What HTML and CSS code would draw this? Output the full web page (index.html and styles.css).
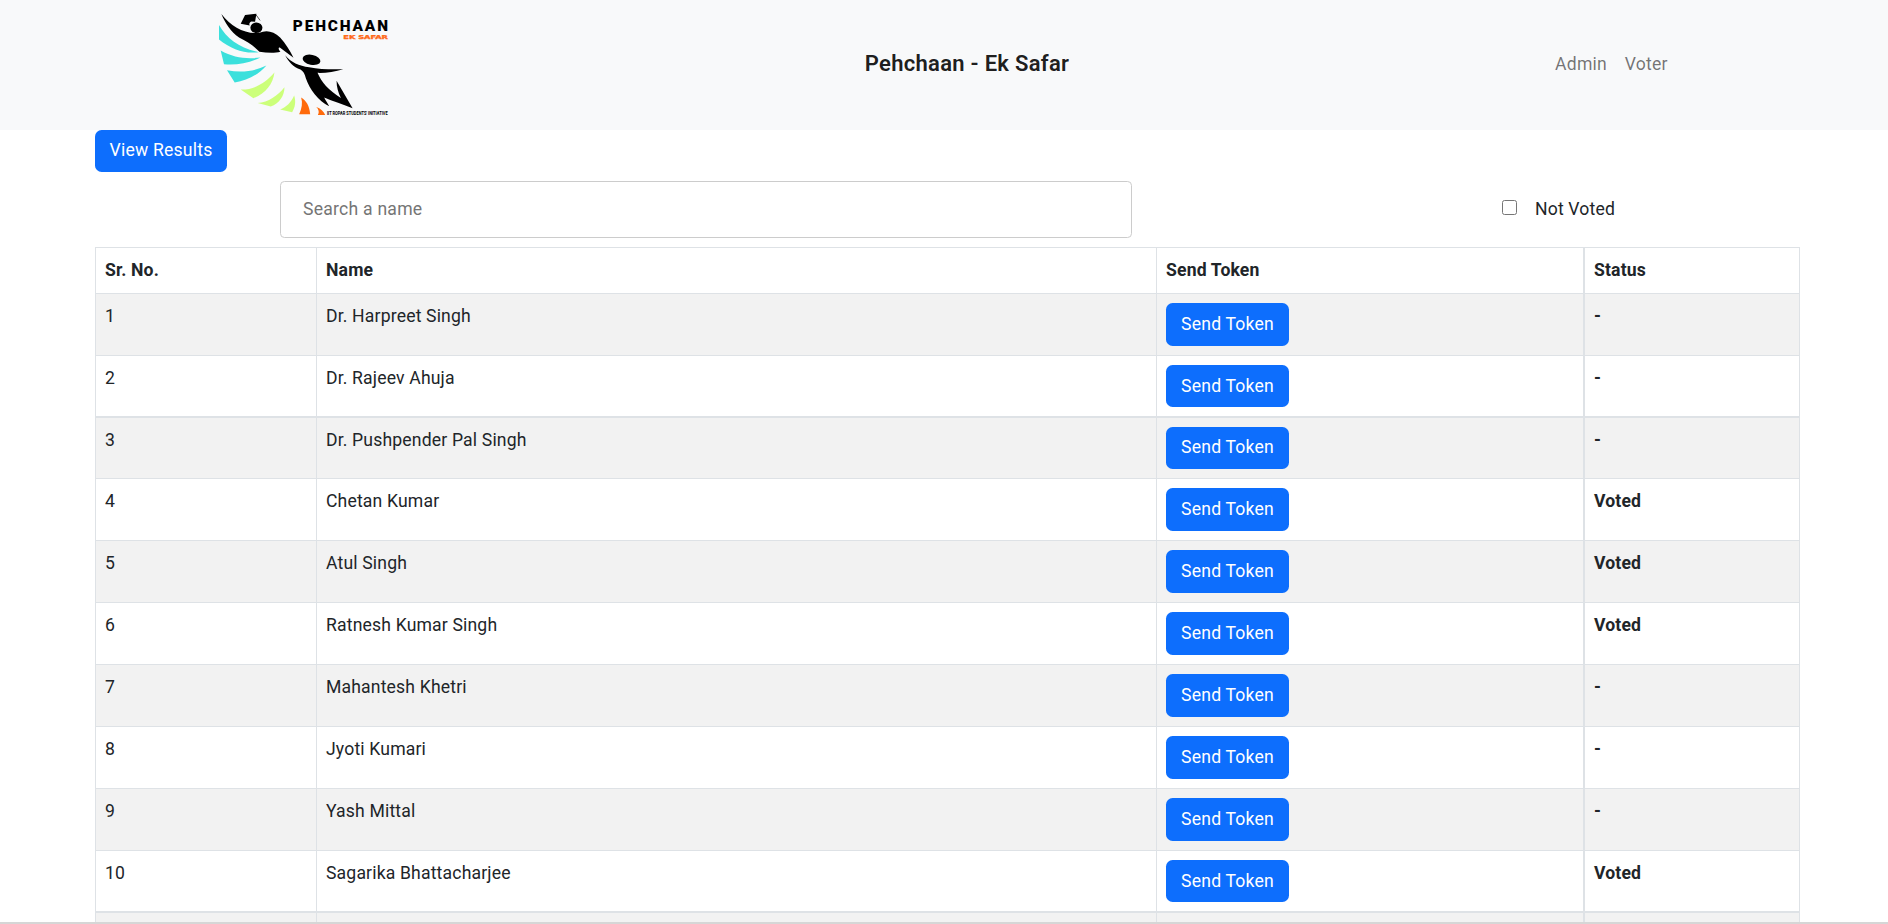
FILE: index.html
```
<!DOCTYPE html>
<html lang="en">
<head>
<meta charset="utf-8">
<title>Pehchaan - Ek Safar</title>
<link rel="stylesheet" href="styles.css">
</head>
<body>
<nav class="navbar">
  <svg class="logo" viewBox="42 40 506 308" role="img" aria-label="Pehchaan Ek Safar">
    <g fill="#3be0dc">
      <path d="M42 76C66 118 105 146 161 157C120 163 78 148 42 119Z"/>
      <path d="M47 152C86 174 124 178 166 173C132 189 94 197 57 193Z"/>
      <path d="M66 211C110 219 149 214 184 197C159 226 126 242 89 248Z"/>
    </g>
    <g fill="#ccff7a">
      <path d="M107 269C148 270 181 249 208 218C204 252 182 280 145 295Z"/>
      <path d="M158 309C190 307 217 288 238 262C238 289 222 310 197 320Z"/>
      <path d="M225 329C244 322 258 307 267 287C273 306 270 322 261 337Z"/>
    </g>
    <g fill="#ff6a0a">
      <path d="M288 293C303 302 313 318 315 343L282 343C290 326 293 310 288 293Z"/>
      <path d="M333 321C346 325 356 334 360 345L338 345C343 337 341 328 333 321Z"/>
    </g>
    <path d="M49 43C78 80 120 105 163 99C184 90 205 94 225 113C242 132 254 151 265 174L224 143C218 143 221 150 226 156C207 161 184 159 163 156C145 137 126 125 102 113C77 96 61 71 49 43Z"/>
    <path d="M107 72L120 46L154 42L150 66L139 65C132 68 132 74 134 77Z"/>
    <path d="M152 44L165 62" fill="none" stroke="#000" stroke-width="2"/>
    <ellipse cx="154" cy="84" rx="18" ry="16"/>
    <ellipse cx="319" cy="180" rx="27" ry="15" transform="rotate(12 319 180)"/>
    <path d="M240 166C257 187 282 198 312 202C343 209 376 208 414 208C389 215 361 220 337 219C348 246 370 272 407 294C399 279 394 262 394 243L442 325C414 314 382 304 357 293C361 302 367 310 372 319C339 303 314 269 302 235C299 222 294 214 286 209C264 202 251 186 240 166Z"/>
    <text class="logo-name" x="263" y="95" textLength="285">PEHCHAAN</text>
    <text class="logo-sub" x="414" y="117" textLength="134" lengthAdjust="spacingAndGlyphs">EK SAFAR</text>
    <text class="logo-note" x="365" y="345" textLength="182" lengthAdjust="spacingAndGlyphs">IIT ROPAR STUDENTS' INITIATIVE</text>
  </svg>
  <h1 class="title">Pehchaan - Ek Safar</h1>
  <div class="links"><a>Admin</a><a>Voter</a></div>
</nav>
<main class="container">
  <button class="btn results">View Results</button>
  <div class="filters">
    <input class="search" type="text" placeholder="Search a name">
    <label class="check"><input type="checkbox">Not Voted</label>
  </div>
  <table class="voters">
    <colgroup><col class="c-no"><col class="c-name"><col class="c-send"><col class="c-status"></colgroup>
    <thead><tr><th>Sr. No.</th><th>Name</th><th>Send Token</th><th>Status</th></tr></thead>
    <tbody>
      <tr><td>1</td><td>Dr. Harpreet Singh</td><td><button class="btn">Send Token</button></td><td>-</td></tr>
      <tr class="thick"><td>2</td><td>Dr. Rajeev Ahuja</td><td><button class="btn">Send Token</button></td><td>-</td></tr>
      <tr class="short"><td>3</td><td>Dr. Pushpender Pal Singh</td><td><button class="btn">Send Token</button></td><td>-</td></tr>
      <tr><td>4</td><td>Chetan Kumar</td><td><button class="btn">Send Token</button></td><td>Voted</td></tr>
      <tr><td>5</td><td>Atul Singh</td><td><button class="btn">Send Token</button></td><td>Voted</td></tr>
      <tr><td>6</td><td>Ratnesh Kumar Singh</td><td><button class="btn">Send Token</button></td><td>Voted</td></tr>
      <tr><td>7</td><td>Mahantesh Khetri</td><td><button class="btn">Send Token</button></td><td>-</td></tr>
      <tr><td>8</td><td>Jyoti Kumari</td><td><button class="btn">Send Token</button></td><td>-</td></tr>
      <tr><td>9</td><td>Yash Mittal</td><td><button class="btn">Send Token</button></td><td>-</td></tr>
      <tr class="thick"><td>10</td><td>Sagarika Bhattacharjee</td><td><button class="btn">Send Token</button></td><td>Voted</td></tr>
      <tr><td></td><td></td><td></td><td></td></tr>
    </tbody>
  </table>
</main>
</body>
</html>
```
FILE: styles.css
```
* { box-sizing: border-box; }
body {
  margin: 0;
  height: 924px;
  overflow: hidden;
  display: flex;
  flex-direction: column;
  border-bottom: 2px solid #d6d6d6;
  background: #fff;
  color: #212529;
  font: 17.6px/26.4px Roboto, sans-serif;
  letter-spacing: .16px;
}
.navbar {
  flex: none;
  height: 130px;
  padding: 0 219px 2px;
  display: grid;
  grid-template-columns: 1fr auto 1fr;
  align-items: center;
  background: #f8f9fa;
}
.logo {
  width: 169px;
  height: 103px;
  margin-top: 1px;
  overflow: visible;
  letter-spacing: 0;
}
.logo text { font-family: Roboto, sans-serif; font-weight: 900; }
.logo-name { font-size: 46px; }
.logo .logo-sub { font-family: "DejaVu Sans", sans-serif; font-size: 16px; font-weight: 700; fill: #ff6a1a; stroke: #ff6a1a; }
.logo .logo-note { font-size: 14px; font-weight: 700; }
.title {
  margin: 0 0 0 46px;
  font-size: 22px;
  font-weight: 600;
  letter-spacing: .28px;
  color: rgba(0, 0, 0, .9);
}
.links {
  display: flex;
  justify-content: flex-end;
  gap: 17.6px;
  padding-right: 1.2px;
  letter-spacing: .25px;
  color: rgba(0, 0, 0, .55);
}
.container {
  flex: 1;
  min-height: 0;
  overflow: hidden;
  width: 1705px;
  margin-left: 95px;
}
.btn {
  display: block;
  width: 123px;
  height: 43px;
  padding: 0 0 1px;
  border: 0;
  border-radius: 6.6px;
  background: #0d6efd;
  color: #fff;
  font: inherit;
  letter-spacing: .2px;
  text-align: center;
}
.btn.results { width: 132px; height: 42px; padding-bottom: 2px; }
.thick .btn,
.short .btn { height: 42px; }
.thick .btn { padding-bottom: 0; }
.short .btn { padding-bottom: 2px; }
.filters {
  display: flex;
  align-items: center;
  padding: 9px 0;
}
.search {
  width: 852px;
  height: 57px;
  margin-left: 185px;
  padding: 0 22px 2px;
  border: 1px solid #ccc;
  border-radius: 4.4px;
  font: inherit;
  letter-spacing: .23px;
  color: #212529;
}
.search::placeholder { color: #757575; }
.check {
  display: flex;
  align-items: center;
  gap: 18px;
  margin-left: 370px;
}
.check input {
  width: 15px;
  height: 15px;
  margin: 0 0 5px;
}
.voters {
  width: 1705px;
  table-layout: fixed;
  border-collapse: separate;
  border-spacing: 0;
  border: solid #dee2e6;
  border-width: 1px 0 0 1px;
}
.c-no { width: 221px; }
.c-name { width: 840px; }
.c-send { width: 428px; }
.c-status { width: 215px; }
.voters th,
.voters td {
  padding: 9px 9px 8px;
  border: solid #dee2e6;
  border-width: 0 1px 1px 0;
  text-align: left;
  vertical-align: top;
}
.voters th { height: 46px; }
.voters td { height: 62px; }
.voters .short td { height: 61px; }
.voters th:nth-child(3),
.voters td:nth-child(3) { border-right-width: 2px; }
.voters .thick td { border-bottom-width: 2px; }
.voters td:last-child { font-weight: 700; }
.voters tbody tr:nth-child(odd) { background: #f2f2f2; }
```
